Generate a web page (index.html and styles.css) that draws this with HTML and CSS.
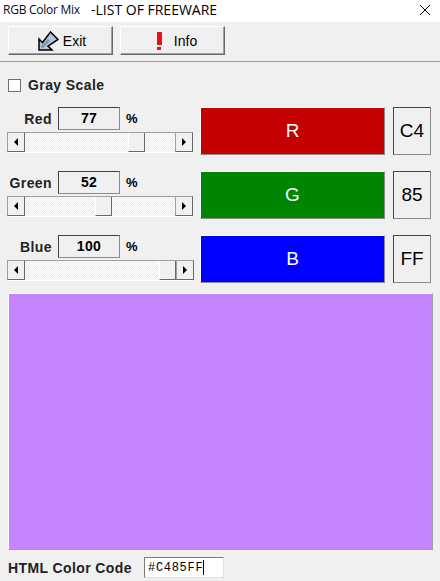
FILE: index.html
```html
<!DOCTYPE html>
<html lang="en">
<head>
    <meta charset="UTF-8">
    <meta name="viewport" content="width=device-width, initial-scale=1.0">
    <title>RGB Color Mix</title>
    <link rel="stylesheet" href="styles.css">
</head>
<body>
    <div class="titlebar">
        <span class="app-name">RGB Color Mix</span>
        <span class="app-sub">-LIST OF FREEWARE</span>
        <svg class="close-icon" width="12" height="12" viewBox="0 0 12 12"><path d="M1 1L11 11M11 1L1 11" stroke="#000" stroke-width="1" fill="none"/></svg>
    </div>

    <div class="toolbar">
        <button class="tool-btn exit-btn">
            <svg class="exit-icon" width="21" height="20" viewBox="0 0 21 20">
                <path d="M1 8L4.500 11.500L12.500 1L20 8.500L10 15L14 19L1 19Z" fill="#b4c6da" stroke="#000" stroke-width="1.500" stroke-linejoin="miter"/>
                <path d="M3.500 16.500L11 9" stroke="#8499b2" stroke-width="3" fill="none"/>
            </svg>
            <span>Exit</span>
        </button>
        <button class="tool-btn info-btn">
            <span class="bang"><span class="bang-bar"></span><span class="bang-dot"></span></span>
            <span>Info</span>
        </button>
    </div>

    <label class="gray-row">
        <span class="checkbox"></span>
        <span class="gray-label">Gray Scale</span>
    </label>

    <div class="channel">
        <div class="controls">
            <div class="value-row">
                <span class="name">Red</span>
                <span class="value">77</span>
                <span class="pct">%</span>
            </div>
            <div class="scrollbar">
                <span class="arrow"><span class="tri-left"></span></span>
                <span class="track"><span class="thumb" style="margin-left:103px"></span></span>
                <span class="arrow"><span class="tri-right"></span></span>
            </div>
        </div>
        <div class="swatch red">R</div>
        <div class="hex">C4</div>
    </div>

    <div class="channel">
        <div class="controls">
            <div class="value-row">
                <span class="name">Green</span>
                <span class="value">52</span>
                <span class="pct">%</span>
            </div>
            <div class="scrollbar">
                <span class="arrow"><span class="tri-left"></span></span>
                <span class="track"><span class="thumb" style="margin-left:70px"></span></span>
                <span class="arrow"><span class="tri-right"></span></span>
            </div>
        </div>
        <div class="swatch green">G</div>
        <div class="hex">85</div>
    </div>

    <div class="channel">
        <div class="controls">
            <div class="value-row">
                <span class="name">Blue</span>
                <span class="value">100</span>
                <span class="pct">%</span>
            </div>
            <div class="scrollbar">
                <span class="arrow"><span class="tri-left"></span></span>
                <span class="track"><span class="thumb" style="margin-left:134px"></span></span>
                <span class="arrow"><span class="tri-right"></span></span>
            </div>
        </div>
        <div class="swatch blue">B</div>
        <div class="hex">FF</div>
    </div>

    <div class="preview"></div>

    <div class="code-row">
        <span class="code-label">HTML Color Code</span>
        <span class="code-input">#C485FF<span class="caret"></span></span>
    </div>
</body>
</html>
```

FILE: styles.css
```css
* {
    box-sizing: border-box;
}
body {
    margin: 0;
    width: 440px;
    height: 581px;
    overflow: hidden;
    background-color: #f0f0f0;
    color: #000;
    font-family: "Liberation Sans", Arial, sans-serif;
}
.titlebar {
    display: flex;
    align-items: center;
    height: 22px;
    padding-bottom: 3px;
    padding-left: 3px;
    background-color: #fff;
}
.app-name {
    width: 88px;
    font-family: "Open Sans", sans-serif;
    font-size: 12px;
    letter-spacing: -0.25px;
    color: #0a0a30;
}
.app-sub {
    font-family: "Open Sans", sans-serif;
    font-size: 14px;
}
.close-icon {
    margin-left: auto;
    margin-right: 9px;
}
.toolbar {
    display: flex;
    gap: 7px;
    height: 40px;
    padding: 4px 0 0 8px;
    border-bottom: 1px solid #a0a0a0;
}
.tool-btn {
    display: flex;
    align-items: center;
    justify-content: center;
    width: 105px;
    height: 29px;
    padding: 0;
    background-color: #f0f0f0;
    border: 1px solid;
    border-color: #fff #696969 #696969 #fff;
    box-shadow: inset -1px -1px 0 #a0a0a0;
    font-family: "Liberation Sans", Arial, sans-serif;
    font-size: 14px;
}
.exit-btn {
    gap: 4px;
    padding-left: 3px;
}
.info-btn {
    gap: 12px;
    padding-left: 9px;
}
.bang {
    display: flex;
    flex-direction: column;
    align-items: center;
    gap: 2px;
    width: 5px;
}
.bang-bar {
    width: 5px;
    height: 13px;
    background-color: #ee1111;
}
.bang-dot {
    width: 4px;
    height: 3px;
    background-color: #ee1111;
}
.gray-row {
    display: flex;
    align-items: center;
    gap: 7px;
    height: 14px;
    margin: 16px 0 15px 8px;
}
.checkbox {
    width: 13px;
    height: 13px;
    background-color: #fff;
    border: 1px solid #707070;
}
.gray-label {
    font-size: 14px;
    font-weight: bold;
    letter-spacing: 0.4px;
    color: #222;
}
.channel {
    display: flex;
    height: 48px;
    margin: 0 0 16px 7px;
}
.controls {
    width: 186px;
    margin-right: 7px;
}
.value-row {
    display: flex;
    align-items: center;
    height: 23px;
    margin-bottom: 2px;
}
.name {
    width: 45px;
    margin-right: 6px;
    text-align: right;
    font-size: 14px;
    font-weight: bold;
    letter-spacing: 0.4px;
    color: #222;
}
.value {
    width: 62px;
    height: 23px;
    line-height: 20px;
    border: 1px solid;
    border-color: #444 #8a8a8a #8a8a8a #444;
    text-align: center;
    font-size: 14px;
    font-weight: bold;
    letter-spacing: 0.3px;
}
.pct {
    margin-left: 6px;
    font-size: 13px;
    font-weight: bold;
}
.scrollbar {
    display: flex;
    height: 21px;
    background-color: #fff;
}
.arrow {
    display: flex;
    align-items: center;
    justify-content: center;
    flex: none;
    width: 18px;
    height: 20px;
    background-color: #f0f0f0;
    border: 1px solid;
    border-color: #a0a0a0 #696969 #696969 #a0a0a0;
}
.tri-left {
    border-top: 4px solid transparent;
    border-bottom: 4px solid transparent;
    border-right: 4px solid #000;
}
.tri-right {
    border-top: 4px solid transparent;
    border-bottom: 4px solid transparent;
    border-left: 4px solid #000;
}
.track {
    flex: 1;
    height: 20px;
    border-top: 1px solid #a0a0a0;
    background: repeating-conic-gradient(#ececec 0 25%, #fff 0 50%) 0 0 / 2px 2px;
}
.thumb {
    display: block;
    width: 17px;
    height: 19px;
    background-color: #f0f0f0;
    border-right: 1px solid #696969;
    border-bottom: 1px solid #696969;
    border-left: 1px solid #fff;
}
.swatch {
    display: flex;
    align-items: center;
    justify-content: center;
    width: 185px;
    height: 48px;
    color: #fff;
    font-size: 19px;
    border: 1px solid;
    border-color: #fff #8a8a8a #8a8a8a #fff;
}
.red {
    background-color: #c40000;
}
.green {
    background-color: #008500;
}
.blue {
    background-color: #0000ff;
}
.hex {
    display: flex;
    align-items: center;
    justify-content: center;
    width: 38px;
    height: 48px;
    margin-left: 8px;
    font-size: 19px;
    border: 1px solid;
    border-color: #444 #8a8a8a #8a8a8a #444;
}
.preview {
    width: 425px;
    height: 257px;
    margin: -6px 0 0 8px;
    background-color: #c485ff;
    border: 1px solid;
    border-color: #fff #a0a0a0 #a0a0a0 #fff;
}
.code-row {
    display: flex;
    align-items: center;
    height: 21px;
    margin: 7px 0 0 8px;
}
.code-label {
    width: 136px;
    font-size: 14px;
    font-weight: bold;
    letter-spacing: 0.4px;
    color: #222;
}
.code-input {
    display: flex;
    align-items: center;
    width: 80px;
    height: 21px;
    padding-left: 3px;
    background-color: #fff;
    border: 1px solid;
    border-color: #7a7a7a #e0e0e0 #e0e0e0 #7a7a7a;
    font-family: "Liberation Mono", monospace;
    font-size: 12px;
    letter-spacing: 0.7px;
}
.caret {
    width: 1px;
    height: 15px;
    background-color: #000;
}
```
